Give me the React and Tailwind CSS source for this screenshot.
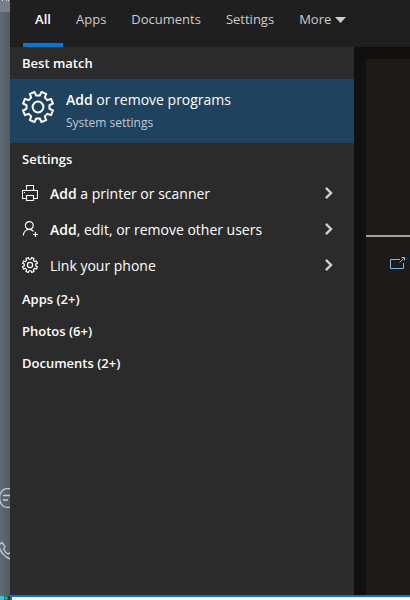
import clsx from "clsx";

const tabs = ["All", "Apps", "Documents", "Settings"];

// Builds a cog outline with square-ish teeth around a centre point
const cogPath = (c, outer, inner, teeth) => {
  const step = (Math.PI * 2) / teeth;
  const points = [];
  for (let i = 0; i < teeth; i++) {
    const a = i * step + step / 2;
    [
      [inner, -0.3],
      [outer, -0.21],
      [outer, 0.21],
      [inner, 0.3],
    ].forEach(([r, k]) => {
      const x = c + r * Math.cos(a + k * step);
      const y = c + r * Math.sin(a + k * step);
      points.push(`${x.toFixed(2)} ${y.toFixed(2)}`);
    });
  }
  return `M${points.join("L")}Z`;
};

const BigCog = () => (
  <svg className="size-8 shrink-0" viewBox="0 0 32 32" fill="none" stroke="currentColor" strokeWidth="2" strokeLinejoin="round">
    <path d={cogPath(16, 15.4, 11.6, 8)} />
    <circle cx="16" cy="16" r="5.4" />
  </svg>
);

const SmallCog = () => (
  <svg className="size-4 shrink-0" viewBox="0 0 16 16" fill="none" stroke="currentColor" strokeWidth="1.2" strokeLinejoin="round">
    <path d={cogPath(8, 7.6, 5.8, 8)} />
    <circle cx="8" cy="8" r="2.6" />
  </svg>
);

const PrinterIcon = () => (
  <svg className="size-4 shrink-0" viewBox="0 0 16 16" fill="none" stroke="currentColor" strokeWidth="1.1">
    <path d="M4.5 5.5V.5h7v5M4.5 13.5h-4v-8h15v8h-4M4.5 10.5h7v5h-7z" />
    <path d="M2 7.5h1" />
  </svg>
);

const UserIcon = () => (
  <svg className="size-4 shrink-0" viewBox="0 0 16 16" fill="none" stroke="currentColor" strokeWidth="1.2">
    <circle cx="7.3" cy="4.5" r="3.9" />
    <path d="M1.3 14.5c.3-3.500 2.700-6.100 6-6.100 1.700 0 3.100.7 4.200 1.900M13.500 11v5M11 13.500h5" />
  </svg>
);

const Chevron = () => (
  <svg className="h-3 w-2 shrink-0 text-[#d0d0d0]" viewBox="0 0 8 12" fill="none" stroke="currentColor" strokeWidth="2.400">
    <path d="M.9.9 6 6 .9 11.100" />
  </svg>
);

const settings = [
  { icon: PrinterIcon, match: "Add", rest: " a printer or scanner" },
  { icon: UserIcon, match: "Add", rest: ", edit, or remove other users" },
  { icon: SmallCog, match: "", rest: "Link your phone" },
];

const more = ["Apps (2+)", "Photos (6+)", "Documents (2+)"];

const heading = "px-3 text-[13px] leading-8 font-semibold";

// Sliver of the window behind the search flyout
const Backdrop = () => (
  <aside className="flex w-[10px] shrink-0 flex-col overflow-hidden bg-linear-to-r from-[#606b76] to-[#525b65] text-[#c5cacf]">
    <div className="h-3 bg-[#7a7f87]">
      <svg className="block h-1 w-[10px]" viewBox="0 0 10 4" fill="#d8dadd">
        <path d="M2 0h1v1H2zM6 0h1v1H6zM8 0h1v1H8z" />
      </svg>
    </div>
    <div className="mt-auto flex flex-col gap-8 pb-9">
      <svg className="-ml-1 h-5 w-5" viewBox="0 0 20 20" fill="none" stroke="currentColor" strokeWidth="1.300">
        <path d="M16 .7H10.500C7 .7 3.500 5 3.500 10s3.500 9.300 7 9.300H16M7 7.500h7M7 12h5" />
      </svg>
      <svg className="-ml-1 h-5 w-5" viewBox="0 0 20 20" fill="none" stroke="currentColor" strokeWidth="1.300">
        <path d="M3 5 6 2.500l3 4L7.500 9c1 2 2.500 4 4.500 5l2.500-1.500 4 4-3 3C9 18 3 10 3 5z" />
      </svg>
    </div>
    <div className="flex h-1 bg-[#17323c]">
      <div className="w-1 bg-[#35c5dc]" />
      <div className="w-1 rounded-full bg-[#27ae60]" />
    </div>
  </aside>
);

const App = () => {
  return (
    <div className="flex h-screen overflow-hidden bg-[#2b2b2b] font-['Open_Sans','Noto_Sans',sans-serif] text-white">
      <Backdrop />
      <div className="flex min-w-0 flex-1 flex-col">
        <nav className="flex h-[47px] shrink-0 gap-px bg-[#1f1f1f] pl-[13px] text-[13px] text-[#cccccc]">
          {tabs.map((tab, i) => (
            <button
              key={tab}
              className={clsx(
                "border-b-4 px-3",
                i === 0 ? "w-10 border-[#0078d7] pb-1 font-semibold text-white" : "border-transparent pb-1"
              )}
            >
              {tab}
            </button>
          ))}
          <button className="flex items-center gap-1 border-b-4 border-transparent px-3 pb-1">
            More
            <svg className="h-[6px] w-[11px]" viewBox="0 0 11 6" fill="currentColor">
              <path d="M0 0h11L5.500 6z" />
            </svg>
          </button>
        </nav>

        <div className="flex min-h-0 flex-1">
          <main className="min-w-0 flex-1">
            <h2 className={heading}>Best match</h2>
            <button className="flex h-16 w-full items-start gap-3 bg-[#1f425f] px-3 pt-3 text-left">
              <BigCog />
              <span>
                <span className="block text-[14px] leading-[18px]">
                  <b className="font-semibold">Add</b> or remove programs
                </span>
                <span className="mt-1 block text-[12px] leading-5 text-[#c0cad2]">System settings</span>
              </span>
            </button>

            <h2 className={heading}>Settings</h2>
            <ul>
              {settings.map(({ icon: Icon, match, rest }) => (
                <li key={rest}>
                  <button className="flex h-9 w-full items-center gap-3 pr-[21px] pl-3 text-left text-[14px]">
                    <Icon />
                    <span className="flex-1 whitespace-nowrap">
                      <b className="font-semibold">{match}</b>
                      {rest}
                    </span>
                    <Chevron />
                  </button>
                </li>
              ))}
            </ul>

            {more.map((label) => (
              <h2 key={label} className={heading}>
                {label}
              </h2>
            ))}
          </main>

          {/* Preview pane, cut off by the window edge */}
          <section className="w-14 shrink-0 bg-[#11100e] pt-3 pl-3">
            <div className="h-full bg-[#1c1b19]">
              <div className="h-[178px] border-b-2 border-[#a3a1a0]" />
              <button aria-label="Open" className="mt-5 ml-6 block text-[#76b9ed]">
                <svg className="h-3 w-4" viewBox="0 0 16 12" fill="none" stroke="currentColor">
                  <path d="M10 2.500H.5v9h13V6M9.500 5.500 14.500.7M11.500.5h3v3" />
                </svg>
              </button>
            </div>
          </section>
        </div>

        <div className="h-[5px] shrink-0 border-t-2 border-l-2 border-[#0078d7] bg-white" />
      </div>
    </div>
  );
};

export default App;
